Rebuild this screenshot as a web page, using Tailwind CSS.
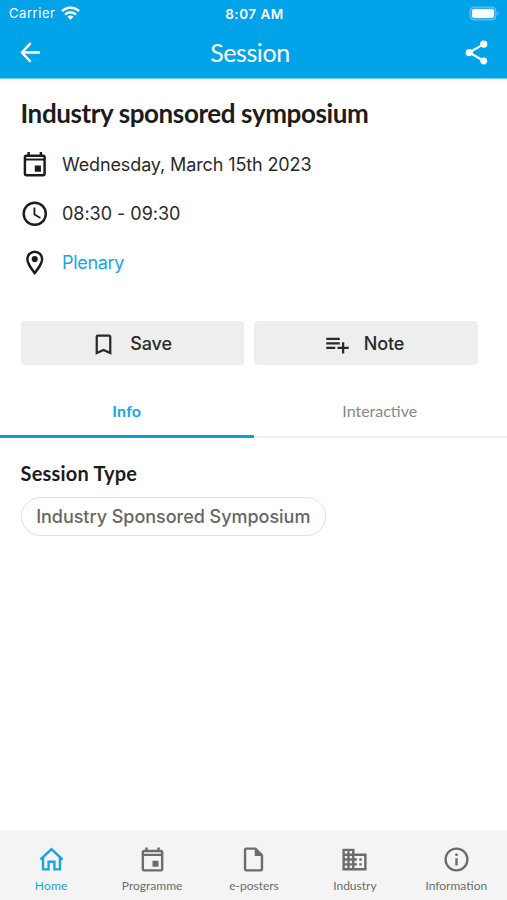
<!DOCTYPE html>
<html lang="en">
<head>
<meta charset="utf-8">
<meta name="viewport" content="width=device-width, initial-scale=1">
<title>Session</title>
<script src="https://cdn.jsdelivr.net/npm/@tailwindcss/browser@4"></script>
</head>
<body class="flex h-screen flex-col overflow-hidden bg-white font-['Inter',sans-serif] text-[#2a2a2a]">
<header class="h-[79px] shrink-0 border-b border-[#6fcbf2] bg-[#00a2e8] text-white">
  <div class="grid h-[27px] grid-cols-3 items-center pl-[9px] pr-[7px] text-[13px]">
    <div class="flex items-center gap-1.5">
      <span class="pt-px tracking-[0.55px]">Carrier</span>
      <svg class="-mt-px h-[14px] w-[19px]" viewBox="0 0 19 14" fill="none" stroke="currentColor" stroke-width="2.5"><path d="M1 5.2a12 12 0 0 1 17 0M4 8.6a7.8 7.8 0 0 1 11 0"/><path d="M9.5 13.8 6.4 10.8a4.4 4.4 0 0 1 6.2 0z" fill="currentColor" stroke="none"/></svg>
    </div>
    <span class="pt-px text-center text-[13.5px] font-semibold tracking-[0.5px]">8:07 AM</span>
    <svg class="h-[15px] w-[31px] justify-self-end" viewBox="0 0 31 15"><rect x="1" y="1" width="26" height="13" rx="4" fill="#fff" fill-opacity=".15" stroke="#fff" stroke-opacity=".35"/><rect x="3" y="3" width="22" height="9" rx="2" fill="#fff"/><path d="M28.5 5.5v4q2-2 0-4z" fill="#fff" opacity=".5"/></svg>
  </div>
  <div class="flex h-[51px] items-center justify-between px-[16px]">
    <svg class="size-[29px]" viewBox="0 0 24 24" fill="none" stroke="currentColor" stroke-width="2" stroke-linecap="round" stroke-linejoin="round"><path d="M19 12H5M11.6 4.8 4.8 12l6.8 7.2"/></svg>
    <h1 class="mr-[7px] font-['Lato',sans-serif] text-[25px] tracking-[-0.45px]">Session</h1>
    <svg class="size-[29px]" viewBox="0 0 24 24" fill="currentColor"><path d="M18,16.08C17.24,16.08 16.56,16.38 16.04,16.85L8.91,12.7C8.96,12.47 9,12.24 9,12C9,11.76 8.96,11.53 8.91,11.3L15.96,7.19C16.5,7.69 17.21,8 18,8A3,3 0 0,0 21,5A3,3 0 0,0 18,2A3,3 0 0,0 15,5C15,5.24 15.04,5.47 15.09,5.7L8.04,9.81C7.5,9.31 6.79,9 6,9A3,3 0 0,0 3,12A3,3 0 0,0 6,15C6.79,15 7.5,14.69 8.04,14.19L15.16,18.34C15.11,18.55 15.08,18.77 15.08,19C15.08,20.61 16.39,21.91 18,21.91C19.61,21.91 20.92,20.61 20.92,19A2.92,2.92 0 0,0 18,16.08Z"/></svg>
  </div>
</header>
<main class="flex-1">
  <section class="px-[20.5px] pt-[17px]">
    <h2 class="whitespace-nowrap font-['Lato',sans-serif] text-[26px] leading-[34px] font-bold tracking-[-0.4px] text-[#1c1c1c]">Industry sponsored symposium</h2>
    <ul class="mt-[10px] text-[18px] tracking-[-0.12px]">
      <li class="flex h-[49px] items-center gap-[12.5px]"><svg class="-ml-[0.5px] size-[29.5px] text-[#1c1c1c]" viewBox="0 0 24 24" fill="currentColor"><path d="M19,19.6H5V8.6H19M16,1.6V3.6H8V1.6H6V3.6H5C3.89,3.6 3,4.5 3,5.6V19.6A2,2 0 0,0 5,21.6H19A2,2 0 0,0 21,19.6V5.6C21,4.5 20.1,3.6 19,3.6H18V1.6M17,12.6H12V17.6H17V12.6ZM5,5.6H19V6.9H5Z" fill-rule="evenodd"/></svg><span>Wednesday, March 15th 2023</span></li>
      <li class="flex h-[49px] items-center gap-[12.5px]"><svg class="size-[29.5px] -ml-[0.5px] text-[#1c1c1c]" viewBox="0 0 24 24" fill="currentColor"><path d="M12,20A8,8 0 0,0 20,12A8,8 0 0,0 12,4A8,8 0 0,0 4,12A8,8 0 0,0 12,20M12,2A10,10 0 0,1 22,12A10,10 0 0,1 12,22C6.47,22 2,17.5 2,12A10,10 0 0,1 12,2M12.5,7V12.25L17,14.92L16.25,16.15L11,13V7H12.5Z"/></svg><span class="tracking-[-0.03px]">08:30 - 09:30</span></li>
      <li class="flex h-[49px] items-center gap-[12.5px]"><svg class="-ml-[0.5px] size-[29.5px] text-[#1c1c1c]" viewBox="0 0 24 24" fill="currentColor"><path d="M12,6.5A2.5,2.5 0 0,1 14.5,9A2.5,2.5 0 0,1 12,11.5A2.5,2.5 0 0,1 9.5,9A2.5,2.5 0 0,1 12,6.5M12,2A7,7 0 0,1 19,9C19,14.25 12,22 12,22C12,22 5,14.25 5,9A7,7 0 0,1 12,2M12,4A5,5 0 0,0 7,9C7,10 7,12 12,18.71C17,12 17,10 17,9A5,5 0 0,0 12,4Z"/></svg><a class="tracking-[-0.3px] text-[#1ba5e0]">Plenary</a></li>
    </ul>
    <div class="mt-[34px] flex gap-[10px] pr-[9px] text-[18px] font-medium tracking-[-0.1px]">
      <button class="flex h-[44px] flex-1 items-center justify-center gap-[13px] rounded-[4px] bg-[#eee] pr-[2px]"><svg class="mt-[3px] size-[27px]" viewBox="0 0 24 24" fill="currentColor"><path d="M17,18L12,15.82L7,18V5H17M17,3H7A2,2 0 0,0 5,5V21L12,18L19,21V5C19,3.89 18.1,3 17,3Z"/></svg><span>Save</span></button>
      <button class="flex h-[44px] flex-1 items-center justify-center gap-[13px] rounded-[4px] bg-[#eee] pr-[3px]"><svg class="mt-[3px] size-[27px]" viewBox="0 0 24 24" fill="currentColor"><path d="M2,16H10V14H2M18,14V10H16V14H12V16H16V20H18V16H22V14M14,6H2V8H14M14,10H2V12H14V10Z"/></svg><span>Note</span></button>
    </div>
  </section>
  <nav class="mt-[21px] flex h-[52px] border-b-2 border-[#eee] font-['Lato',sans-serif] text-[16px]">
    <a class="-mb-[2px] flex w-1/2 items-center justify-center border-b-3 border-[#129bdc] font-bold tracking-[0.2px] text-[#1ba5e0]">Info</a>
    <a class="flex w-1/2 items-center justify-center pr-px text-[#888]">Interactive</a>
  </nav>
  <section class="px-[20.5px] pt-[22px]">
    <h3 class="font-['Lato',sans-serif] text-[20px] leading-[26px] font-bold tracking-[0.2px] text-[#1c1c1c]">Session Type</h3>
    <span class="mt-[11px] flex h-[39px] w-[305.5px] items-center justify-center rounded-full border border-[#e0e0e0] text-[18px] font-medium tracking-[-0.03px] whitespace-nowrap text-[#666]">Industry Sponsored Symposium</span>
  </section>
</main>
<footer class="grid h-[70px] shrink-0 grid-cols-5 border-t border-[#fafafa] bg-[#f4f4f4] font-['Lato',sans-serif] text-[12px] text-[#6c6c6c]">
  <a class="flex flex-col items-center pt-[14px] pl-px text-[#1ba5e0]"><svg class="size-[29px]" viewBox="0 0 24 24" fill="none" stroke="currentColor" stroke-width="2"><path d="M2.9 12 12 3.4l9.1 8.6M5 10.4V20.2H9.6v-6.4h4.8v6.4H19V10.4"/></svg><span class="mt-[4px] leading-[16px] tracking-[0.2px]">Home</span></a>
  <a class="flex flex-col items-center pt-[14px]"><svg class="size-[29px]" viewBox="0 0 24 24" fill="currentColor"><path d="M19,20H5V9H19M16,2V4H8V2H6V4H5C3.89,4 3,4.89 3,6V20A2,2 0 0,0 5,22H19A2,2 0 0,0 21,20V6C21,4.89 20.1,4 19,4H18V2M17,13H12V18H17V13ZM5,6H19V7.3H5Z" fill-rule="evenodd"/></svg><span class="mt-[4px] leading-[16px]">Programme</span></a>
  <a class="flex flex-col items-center pt-[14px] pl-px"><svg class="size-[29px]" viewBox="0 0 24 24" fill="currentColor"><path fill-rule="evenodd" d="M6 2h8l6 6v12a2 2 0 0 1-2 2H6a2 2 0 0 1-2-2V4a2 2 0 0 1 2-2M6 4v16h12V9h-5V4z"/></svg><span class="mt-[4px] leading-[16px]">e-posters</span></a>
  <a class="flex flex-col items-center pt-[14px]"><svg class="size-[29px]" viewBox="0 0 24 24" fill="currentColor"><path d="M18,15H16V17H18M18,11H16V13H18M20,19H12V17H14V15H12V13H14V11H12V9H20M10,7H8V5H10M10,11H8V9H10M10,15H8V13H10M10,19H8V17H10M6,7H4V5H6M6,11H4V9H6M6,15H4V13H6M6,19H4V17H6M12,7V3H2V21H22V7H12Z"/></svg><span class="mt-[4px] leading-[16px]">Industry</span></a>
  <a class="flex flex-col items-center pt-[14px]"><svg class="size-[29px]" viewBox="0 0 24 24" fill="currentColor"><path d="M11,9H13V7H11M12,20C7.59,20 4,16.41 4,12C4,7.59 7.59,4 12,4C16.41,4 20,7.59 20,12C20,16.41 16.41,20 12,20M12,2A10,10 0 0,0 2,12A10,10 0 0,0 12,22A10,10 0 0,0 22,12A10,10 0 0,0 12,2M11,17H13V11H11V17Z"/></svg><span class="mt-[4px] leading-[16px]">Information</span></a>
</footer>
</body>
</html>
